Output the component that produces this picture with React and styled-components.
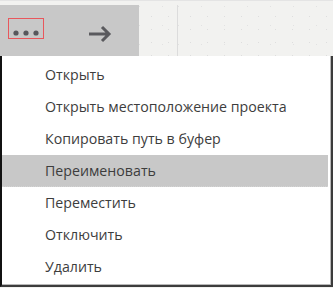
import React from "react";
import styled, { createGlobalStyle } from "styled-components";

const GlobalStyle = createGlobalStyle`
  html, body {
    margin: 0;
    padding: 0;
    background: #f2f2f0;
  }
`;

const Page = styled.div`
  width: 333px;
  height: 288px;
  box-sizing: border-box;
  background-color: #f2f2f0;
  display: flex;
  flex-direction: column;
  overflow: hidden;
  font-family: "Open Sans", "Noto Sans", sans-serif;
`;

const Toolbar = styled.div`
  height: 56px;
  padding-top: 4px;
  box-sizing: border-box;
  display: flex;
  border-top: 1px solid #e4e4e4;
`;

const MoreButton = styled.div`
  width: 139px;
  background-color: #c8c8c8;
  display: flex;
  align-items: flex-start;
  padding: 13px 0 0 8px;
  box-sizing: border-box;
  gap: 44px;
`;

const Dotted = styled.div`
  flex: ${(p) => (p.$grow ? 1 : "none")};
  width: ${(p) => (p.$grow ? "auto" : "38px")};
  background-color: #f2f2f0;
  background-image: radial-gradient(circle, #dedede 0.6px, transparent 1px),
    radial-gradient(circle, #e2e2e2 0.6px, transparent 1px);
  background-size: 17px 13px, 23px 19px;
  background-position: 4px 5px, 12px 11px;
  border-right: ${(p) => (p.$grow ? "none" : "1px solid #dcdcdc")};
`;

const FocusBox = styled.div`
  width: 36px;
  height: 21px;
  box-sizing: border-box;
  border: 1px solid #e8575c;
  display: flex;
  align-items: flex-end;
  justify-content: center;
  padding-bottom: 2px;
`;

const Menu = styled.div`
  flex: 1;
  background: #fff;
  border-left: 2px solid #111;
  border-right: 2px solid #3c3c3c;
  border-bottom: 2px solid #3c3c3c;
  box-shadow: inset -1px -1px 0 #b8b8b8;
  padding: 3px 3px 0 0;
  margin-bottom: 1px;
  display: flex;
  flex-direction: column;
`;

const Item = styled.div`
  height: 32px;
  display: flex;
  align-items: center;
  padding-left: 43px;
  font-size: 14.2px;
  color: #3d3d3d;
  background: ${(p) => (p.$active ? "#c8c8c8" : "transparent")};
  border-bottom: 1px dotted ${(p) => (p.$active ? "#d4d4d4" : "transparent")};
  box-sizing: border-box;
`;

const items = [
  "Открыть",
  "Открыть местоположение проекта",
  "Копировать путь в буфер",
  "Переименовать",
  "Переместить",
  "Отключить",
  "Удалить",
];

export default function App() {
  return (
    <Page>
      <GlobalStyle />
      <Toolbar>
        <MoreButton>
          <FocusBox>
            <svg width="26" height="6" viewBox="0 0 26 6">
              <circle cx="3" cy="3" r="2.6" fill="#58585d" />
              <circle cx="13" cy="3" r="2.6" fill="#58585d" />
              <circle cx="23" cy="3" r="2.6" fill="#58585d" />
            </svg>
          </FocusBox>
          <svg width="24" height="18" viewBox="0 0 24 18" style={{ marginTop: 7 }}>
            <path
              d="M1 9 H21 M14 2 L21 9 L14 16"
              stroke="#5a5a5e"
              strokeWidth="3"
              fill="none"
            />
          </svg>
        </MoreButton>
        <Dotted />
        <Dotted $grow />
      </Toolbar>
      <Menu>
        {items.map((t) => (
          <Item key={t} $active={t === "Переименовать"}>
            {t}
          </Item>
        ))}
      </Menu>
    </Page>
  );
}
